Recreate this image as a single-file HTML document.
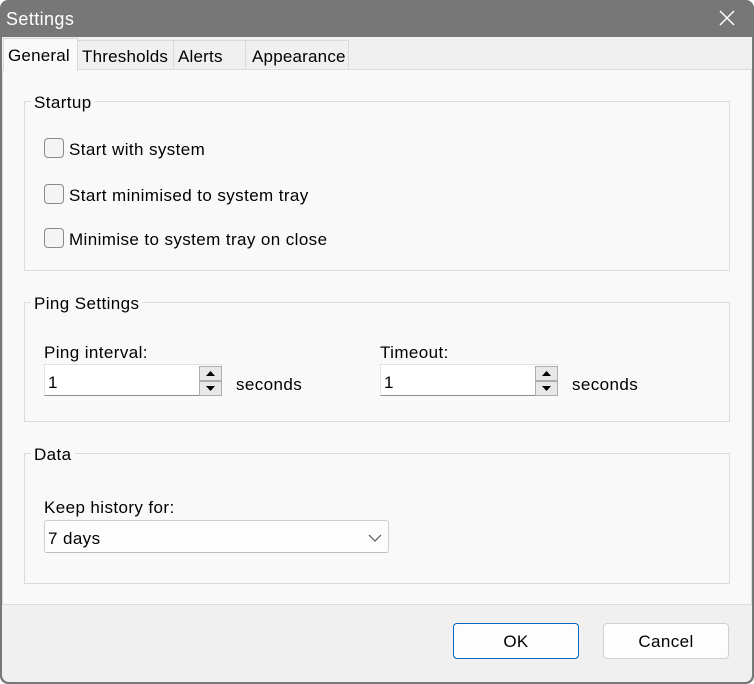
<!DOCTYPE html>
<html><head><style>
*{margin:0;padding:0;box-sizing:border-box}
body{width:754px;height:684px;background:#fff;font-family:"Liberation Sans",sans-serif;font-size:17px;letter-spacing:0.4px;color:#000;position:relative;overflow:hidden}
.win{position:absolute;left:0;top:0;width:754px;height:684px;background:#777;border-radius:8px 8px 8px 8px;overflow:hidden}
.title{position:absolute;left:6px;top:9px;color:#fff;font-size:18px}
.x{position:absolute;left:718px;top:9px}
.body{position:absolute;left:2px;top:37px;width:750px;height:645px;background:#f0f0f0;border-radius:0 0 7px 7px}
.panel{position:absolute;left:0;top:32px;width:750px;height:536px;background:#f9f9f9;border:1px solid #dcdcdc}
.tab{position:absolute;top:3px;height:30px;background:#f0f0f0;border:1px solid #d9d9d9;border-bottom:none;padding:6px 0 0 4px;letter-spacing:0.2px}
.tab.sel{top:1px;height:33px;background:#f9f9f9;border-color:#d9d9d9;z-index:2;padding-top:7px}
.grp{position:absolute;left:22px;width:706px;border:1px solid #dcdcdc}
.gl{position:absolute;left:6px;top:-9px;background:#f9f9f9;padding:0 3px}
.abs{position:absolute;white-space:nowrap}
.t{margin-top:1px}
.cb{position:absolute;width:20px;height:20px;border:1px solid #8a8a8a;border-radius:4px;background:#f4f4f4}
.spin{position:absolute;height:32px;width:178px;background:#fff;border:1px solid #e3e3e3;border-bottom:1px solid #8c8c8c}
.sb{position:absolute;left:154px;width:23px;height:15px;background:#e8e8e8;border:1px solid #adadad}
.btn{position:absolute;top:586px;width:126px;height:36px;border:1px solid #d0d0d0;border-radius:4px;background:#fdfdfd;text-align:center;line-height:36px}
</style></head><body>
<div class="win">
<div class="title">Settings</div>
<svg class="x" width="18" height="18" viewBox="0 0 18 18"><path d="M2 2L16 16M16 2L2 16" stroke="#fff" stroke-width="1.5"/></svg>
<div class="body">
<div class="tab sel" style="left:1px;width:75px">General</div>
<div class="tab" style="left:75px;width:97px">Thresholds</div>
<div class="tab" style="left:171px;width:73px">Alerts</div>
<div class="tab" style="left:243px;width:104px;padding-left:6px">Appearance</div>
<div class="panel"></div>
<div class="grp" style="top:64px;height:170px"><span class="gl">Startup</span></div>
<div class="cb" style="left:42px;top:101px"></div><span class="abs" style="left:67px;top:103px">Start with system</span>
<div class="cb" style="left:42px;top:147px"></div><span class="abs" style="left:67px;top:149px">Start minimised to system tray</span>
<div class="cb" style="left:42px;top:191px"></div><span class="abs" style="left:67px;top:193px">Minimise to system tray on close</span>
<div class="grp" style="top:265px;height:120px"><span class="gl">Ping Settings</span></div>
<span class="abs" style="left:42px;top:306px">Ping interval:</span>
<div class="spin" style="left:42px;top:327px"><span class="abs" style="left:3px;top:8px">1</span>
<div class="sb" style="top:1px"><svg width="21" height="13" style="position:absolute;left:0;top:0"><path d="M6 9L10.5 4L15 9Z" fill="#000"/></svg></div>
<div class="sb" style="top:16px"><svg width="21" height="13" style="position:absolute;left:0;top:0"><path d="M6 4L10.5 9L15 4Z" fill="#000"/></svg></div></div>
<span class="abs" style="left:234px;top:338px">seconds</span>
<span class="abs" style="left:378px;top:306px">Timeout:</span>
<div class="spin" style="left:378px;top:327px"><span class="abs" style="left:3px;top:8px">1</span>
<div class="sb" style="top:1px"><svg width="21" height="13" style="position:absolute;left:0;top:0"><path d="M6 9L10.5 4L15 9Z" fill="#000"/></svg></div>
<div class="sb" style="top:16px"><svg width="21" height="13" style="position:absolute;left:0;top:0"><path d="M6 4L10.5 9L15 4Z" fill="#000"/></svg></div></div>
<span class="abs" style="left:570px;top:338px">seconds</span>
<div class="grp" style="top:416px;height:131px"><span class="gl">Data</span></div>
<span class="abs" style="left:42px;top:461px">Keep history for:</span>
<div class="abs" style="left:42px;top:483px;width:345px;height:33px;background:#fdfdfd;border:1px solid #d0d0d0;border-bottom-color:#bdbdbd;border-radius:3px"><span class="abs" style="left:3px;top:8px">7 days</span>
<svg width="14" height="10" style="position:absolute;left:323px;top:12px"><path d="M1 2L7 8L13 2" stroke="#555" fill="none" stroke-width="1.2"/></svg></div>
<div class="btn" style="left:451px;border:1px solid #0067c0">OK</div>
<div class="btn" style="left:601px">Cancel</div>
</div>
</div>
</body></html>
